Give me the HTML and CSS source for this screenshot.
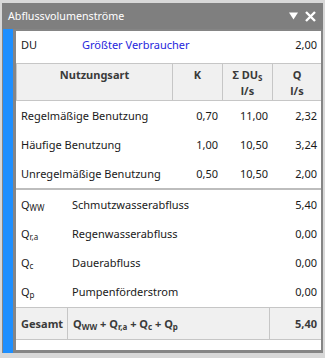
FILE: index.html
```html
<!DOCTYPE html>
<html lang="de">

<head>
  <meta charset="UTF-8">
  <meta name="viewport" content="width=device-width, initial-scale=1.0">
  <title>Abflussvolumenströme</title>
  <link rel="stylesheet" href="styles.css">
</head>

<body>
  <div class="panel">
    <div class="titlebar">
      <span class="title">Abflussvolumenströme</span>
      <span class="tools">
        <svg width="9" height="8" viewBox="0 0 9 8"><path d="M0 0.5 H9 L4.5 7.5 Z" fill="#fff"/></svg>
        <svg width="11" height="11" viewBox="0 0 11 11"><path d="M1 1 L10 10 M10 1 L1 10" stroke="#fff" stroke-width="2.4"/></svg>
      </span>
    </div>
    <div class="frame">
      <div class="stripe"></div>
      <div class="content">
        <!-- größter Verbraucher -->
        <div class="du-row">
          <span class="du-label">DU</span>
          <span class="du-text">Größter Verbraucher</span>
          <span class="num">2,00</span>
        </div>

        <div class="grid head">
          <div class="cell">Nutzungsart</div>
          <div class="cell">K</div>
          <div class="cell">Σ DU<sub>S</sub><br>l/s</div>
          <div class="cell">Q<br>l/s</div>
        </div>

        <div class="grid data">
          <div class="name">Regelmäßige Benutzung</div>
          <div class="num">0,70</div>
          <div class="num">11,00</div>
          <div class="num">2,32</div>

          <div class="name">Häufige Benutzung</div>
          <div class="num">1,00</div>
          <div class="num">10,50</div>
          <div class="num">3,24</div>

          <div class="name">Unregelmäßige Benutzung</div>
          <div class="num">0,50</div>
          <div class="num">10,50</div>
          <div class="num">2,00</div>
        </div>

        <div class="flows">
          <div class="flow">
            <span class="sym">Q<sub>WW</sub></span>
            <span class="desc">Schmutzwasserabfluss</span>
            <span class="num">5,40</span>
          </div>
          <div class="flow">
            <span class="sym">Q<sub>r,a</sub></span>
            <span class="desc">Regenwasserabfluss</span>
            <span class="num">0,00</span>
          </div>
          <div class="flow">
            <span class="sym">Q<sub>c</sub></span>
            <span class="desc">Dauerabfluss</span>
            <span class="num">0,00</span>
          </div>
          <div class="flow">
            <span class="sym">Q<sub>p</sub></span>
            <span class="desc">Pumpenförderstrom</span>
            <span class="num">0,00</span>
          </div>
        </div>

        <div class="total">
          <div class="t-label">Gesamt</div>
          <div class="t-formula"><span>Q<sub>WW</sub> + Q<sub>r,a</sub> + Q<sub>c</sub> + Q<sub>p</sub></span></div>
          <div class="t-value">5,40</div>
        </div>
      </div>
    </div>
  </div>
</body>

</html>
```

FILE: styles.css
```css
body {
  margin: 0;
  background-color: #d8d8d8;
  font-family: "Noto Sans", "Open Sans", Arial, sans-serif;
  font-size: 11px;
  color: #1a1a1a;
}

.panel {
  margin: 3px 2px 0 2px;
  height: 350px;
  background-color: #858585;
}

.titlebar {
  height: 26px;
  display: flex;
  align-items: center;
  justify-content: space-between;
  padding: 0 6px;
  background-color: #7f7f7f;
  color: white;
}

.title {
  font-size: 10.7px;
}

.tools {
  display: flex;
  align-items: center;
  gap: 7px;
  padding-right: 1px;
}

.frame {
  display: flex;
  height: 326px;
}

.stripe {
  width: 10px;
  margin-left: 1px;
  background-color: #1e8fff;
}

.content {
  width: 305px;
  height: 319px;
  margin: 2px 0 0 3px;
  background-color: white;
}

.num {
  text-align: right;
}

.du-row {
  display: flex;
  align-items: center;
  height: 26px;
  margin-bottom: 6px;
  padding: 0 4px 0 5px;
}

.du-label {
  width: 61px;
}

.du-text {
  flex: 1;
  color: #2626dc;
}

.grid {
  display: grid;
  grid-template-columns: 156px 50px 50px 49px;
}

.head {
  background-color: #f0f0f0;
  border-top: 1px solid #c6c6c6;
  border-bottom: 1px solid #c6c6c6;
  font-weight: bold;
  color: #3a3a3a;
  text-align: center;
  line-height: 16px;
}

.head .cell {
  padding: 3px 0 1px;
  border-left: 1px solid #c6c6c6;
}

.head sub,
.flow sub,
.t-formula sub {
  font-size: 8px;
  vertical-align: -2px;
  line-height: 0;
}

.data {
  grid-auto-rows: 29px;
  align-items: center;
  border-bottom: 2px solid #bdbdbd;
}

.data .name {
  padding-left: 5px;
}

.data .num {
  padding-right: 4px;
}

.flow {
  display: flex;
  align-items: center;
  height: 29px;
  padding: 0 4px 0 5px;
}

.sym {
  width: 51px;
}

.desc {
  flex: 1;
}

.total {
  display: grid;
  grid-template-columns: 51px 203px 51px;
  height: 31px;
  margin-top: 1px;
  background-color: #f0f0f0;
  border-top: 1px solid #c6c6c6;
  border-bottom: 1px solid #c6c6c6;
  font-weight: bold;
  color: #3a3a3a;
}

.total > div {
  display: flex;
  align-items: center;
}

.t-label {
  padding-left: 5px;
}

.t-formula {
  padding-left: 5px;
  border-left: 1px solid #c6c6c6;
  border-right: 1px solid #c6c6c6;
}

.t-value {
  justify-content: flex-end;
  padding-right: 4px;
}
```
